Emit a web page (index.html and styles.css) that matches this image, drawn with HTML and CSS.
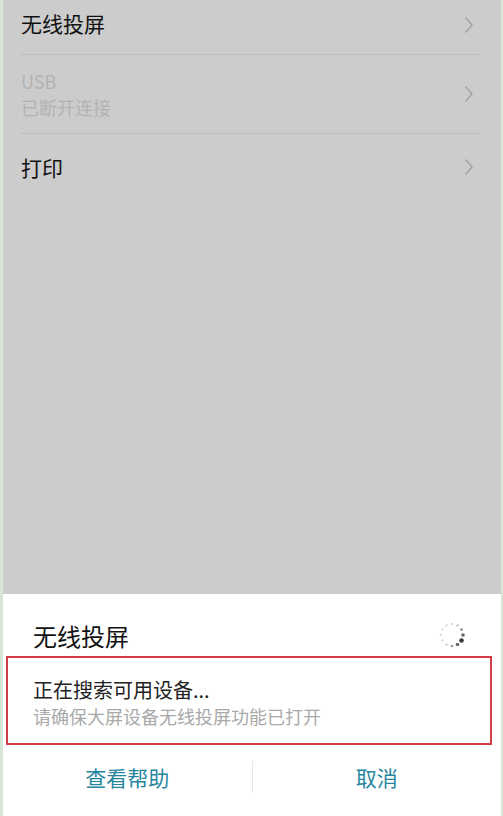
FILE: index.html
```html
<!DOCTYPE html>
<html>
  <head>
    <meta http-equiv="Content-Type" content="text/html; charset=UTF-8">
    <title>无线投屏</title>
    <link rel="stylesheet" href="styles.css">
  </head>
  <body>
    <div class="pantalla">

      <div class="lista">
        <div class="fila fila-primera">
          <span class="titulo">无线投屏</span>
          <svg class="flecha" width="10" height="18" viewBox="0 0 10 18"><path d="M1.5 1.5 L8 9 L1.5 16.5" fill="none" stroke="#a3a3a3" stroke-width="1.4"/></svg>
        </div>
        <div class="fila fila-usb">
          <div class="textos">
            <span class="titulo apagado">USB</span>
            <span class="sub">已断开连接</span>
          </div>
          <svg class="flecha" width="10" height="18" viewBox="0 0 10 18"><path d="M1.5 1.5 L8 9 L1.5 16.5" fill="none" stroke="#a3a3a3" stroke-width="1.4"/></svg>
        </div>
        <div class="fila fila-ultima">
          <span class="titulo">打印</span>
          <svg class="flecha" width="10" height="18" viewBox="0 0 10 18"><path d="M1.5 1.5 L8 9 L1.5 16.5" fill="none" stroke="#a3a3a3" stroke-width="1.4"/></svg>
        </div>
      </div>

      <div class="hoja">
        <div class="hoja-cabecera">
          <span class="hoja-titulo">无线投屏</span>
          <svg class="cargando" width="28" height="28" viewBox="-14 -14 28 28">
            <circle cx="0" cy="-11" r="1.1" fill="#555" opacity="0.3"/>
            <circle cx="5.5" cy="-9.53" r="1.2" fill="#555" opacity="0.35"/>
            <circle cx="9.53" cy="-5.5" r="1.5" fill="#444" opacity="0.55"/>
            <circle cx="11" cy="0" r="1.8" fill="#333" opacity="0.75"/>
            <circle cx="9.53" cy="5.5" r="2.3" fill="#222" opacity="0.9"/>
            <circle cx="5.5" cy="9.53" r="1.8" fill="#333" opacity="0.75"/>
            <circle cx="0" cy="11" r="1.3" fill="#444" opacity="0.55"/>
            <circle cx="-5.5" cy="9.53" r="1.1" fill="#555" opacity="0.35"/>
            <circle cx="-9.53" cy="5.5" r="1.1" fill="#555" opacity="0.3"/>
            <circle cx="-11" cy="0" r="1.1" fill="#555" opacity="0.25"/>
            <circle cx="-9.53" cy="-5.5" r="1.1" fill="#555" opacity="0.25"/>
            <circle cx="-5.5" cy="-9.53" r="1.1" fill="#555" opacity="0.25"/>
          </svg>
        </div>

        <div class="recuadro">
          <div class="buscando">正在搜索可用设备...</div>
          <div class="aviso">请确保大屏设备无线投屏功能已打开</div>
        </div>

        <div class="botones">
          <div class="boton">查看帮助</div>
          <div class="separador"></div>
          <div class="boton">取消</div>
        </div>
      </div>

    </div>
  </body>
</html>
```

FILE: styles.css
```css
body {
  margin: 0;
  font-family: "Noto Sans CJK SC", "Noto Sans", sans-serif;
}

.pantalla {
  width: 503px;
  height: 816px;
  box-sizing: border-box;
  border-left: 3px solid #d4e7d7;
  border-right: 2px solid #d4e7d7;
  display: flex;
  flex-direction: column;
}

.lista {
  flex: 1;
  background: #cccccc;
}

.fila {
  display: flex;
  align-items: center;
  justify-content: space-between;
  margin: 0 21px 0 18px;
  border-bottom: 1px solid #bdbdbd;
}

.fila-primera {
  height: 50px;
  padding-bottom: 4px;
}

.fila-primera .titulo {
  margin-top: -4px;
}

.fila-usb {
  height: 78px;
}

.fila-ultima {
  height: 66px;
  border-bottom: none;
}

.flecha {
  margin-right: 6px;
}

.textos {
  display: flex;
  flex-direction: column;
}

.titulo {
  font-size: 21px;
  line-height: 26px;
  color: #111;
}

.titulo.apagado {
  font-size: 18px;
  color: #b3b3b3;
}

.sub {
  font-size: 18px;
  line-height: 26px;
  color: #b3b3b3;
}

.hoja {
  height: 222px;
  background: #fff;
}

.hoja-cabecera {
  display: flex;
  align-items: center;
  justify-content: space-between;
  height: 42px;
  padding: 20px 35px 0 30px;
}

.hoja-titulo {
  font-size: 24px;
  color: #111;
}

.recuadro {
  margin: 0 9px 0 3px;
  border: 2px solid #d33d48;
  padding: 19px 25px 14px;
}

.buscando {
  font-size: 20px;
  line-height: 26px;
  color: #222;
}

.aviso {
  font-size: 18px;
  line-height: 26px;
  color: #a9a9a9;
}

.botones {
  display: flex;
  align-items: center;
  height: 64px;
}

.boton {
  flex: 1;
  text-align: center;
  font-size: 21px;
  color: #2585a0;
}

.separador {
  width: 1px;
  height: 32px;
  background: #e6e6e6;
}
```
